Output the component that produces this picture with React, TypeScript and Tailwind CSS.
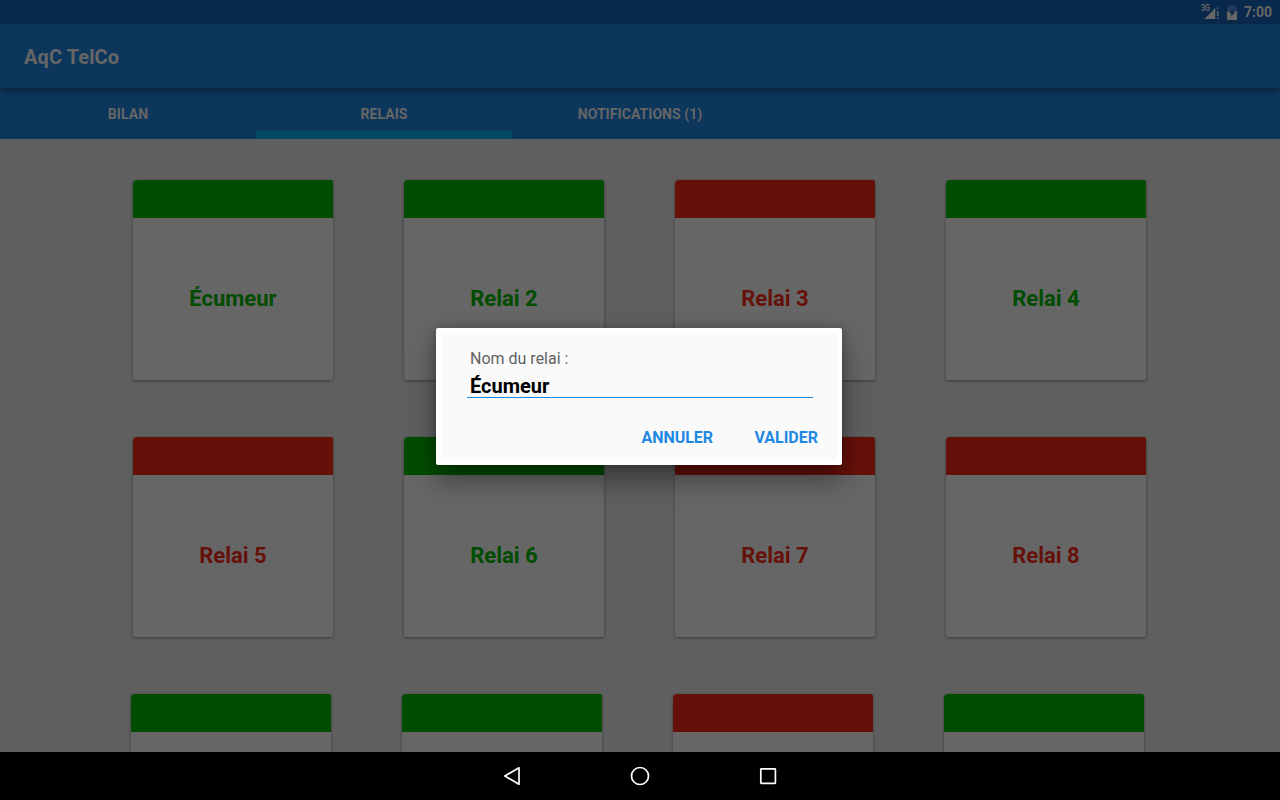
const GREEN = { bar: "bg-[#004c00]", text: "text-[#004c00]" };
const RED = { bar: "bg-[#66100a]", text: "text-[#66100a]" };

const rows = [
  [
    { name: "Écumeur", tone: GREEN },
    { name: "Relai 2", tone: GREEN },
    { name: "Relai 3", tone: RED },
    { name: "Relai 4", tone: GREEN },
  ],
  [
    { name: "Relai 5", tone: RED },
    { name: "Relai 6", tone: GREEN },
    { name: "Relai 7", tone: RED },
    { name: "Relai 8", tone: RED },
  ],
  [
    { name: "", tone: GREEN },
    { name: "", tone: GREEN },
    { name: "", tone: RED },
    { name: "", tone: GREEN },
  ],
];

const tabs = ["BILAN", "RELAIS", "NOTIFICATIONS (1)"];

function StatusBar() {
  return (
    <div className="relative z-20 flex h-6 shrink-0 items-center justify-end bg-[#08284c] pr-2 text-[#666]">
      <svg width="18" height="16" viewBox="0 0 18 16" className="mr-2 overflow-visible" fill="currentColor">
        <path d="M17.5 1v5H15v9H3z" fill="#203a57" />
        <path d="M14 4.5V15H3.5z" />
        <path d="M16 7h1.5v5H16zM16 13.5h1.5V15H16z" />
        <text x="0" y="7" fontSize="9" fontWeight="700" textLength="9" lengthAdjust="spacingAndGlyphs">3G</text>
      </svg>
      <svg width="10" height="15" viewBox="0 0 10 15" className="mr-[7px]">
        <path d="M3 0h4v1.5h3V15H0V1.5h3z" fill="#203a57" />
        <path d="M0 6.5h10V15H0z" fill="#666" />
        <path d="M7.8 3.2L2 7.5l2.7 1.2-1.9 3.2L8.2 7.6 5.8 6.5z" fill="#08284c" />
      </svg>
      <span className="text-sm font-bold leading-6">7:00</span>
    </div>
  );
}

function Dialog() {
  return (
    <div className="absolute left-[436px] top-[328px] z-30 h-[137px] w-[406px] rounded-[2px] border-[5px] border-white bg-[#fafafa] pl-[26px] pr-6 shadow-[0_14px_28px_rgba(0,0,0,0.4),0_0px_10px_rgba(0,0,0,0.2)]">
      <div className="pl-[3px] pt-4 text-base leading-5 text-[#616161]">Nom du relai :</div>
      <div className="h-[29px] border-b border-[#1e88e5] pl-[3px] pt-[3px] text-xl font-bold leading-[29px] text-black">
        Écumeur
      </div>
      <div className="-mr-[5px] mt-7 flex justify-end gap-[41.5px] text-base font-bold leading-6 text-[#1e88e5]">
        <button className="tracking-[-0.05px]">ANNULER</button>
        <button>VALIDER</button>
      </div>
    </div>
  );
}

export default function App() {
  return (
    <div className="relative flex h-[800px] w-[1280px] flex-col overflow-hidden bg-[#5f5f5f] font-['Roboto',sans-serif]">
      <StatusBar />
      <header className="relative z-10 flex h-16 shrink-0 items-center bg-[#0c365c] pl-6 pt-0.5 text-xl font-bold tracking-[0.1px] text-[#666] shadow-[0_3px_8px_rgba(0,0,0,0.4)]">
        AqC TelCo
      </header>
      <nav className="flex h-[51px] shrink-0 bg-[#0c365c] text-sm font-bold tracking-[0.06px] text-[#666]">
        {tabs.map((tab) => (
          <div
            key={tab}
            className={
              tab === "RELAIS"
                ? "flex w-64 items-center justify-center border-b-8 border-[#004a66] pt-2"
                : "flex w-64 items-center justify-center"
            }
          >
            {tab}
          </div>
        ))}
      </nav>
      <main className="flex min-h-0 flex-1 flex-col gap-[57px] overflow-hidden pt-[41px]">
        {rows.map((row, r) => (
          <div key={r} className={r === 2 ? "flex shrink-0 gap-[71px] pl-[131px]" : "flex shrink-0 gap-[71px] pl-[133px]"}>
            {row.map((relay, i) => (
              <div
                key={i}
                className="flex h-[200px] w-[200px] shrink-0 flex-col overflow-hidden rounded-[2px] rounded-tl-[4px] bg-[#666] shadow-[0_1px_3px_rgba(0,0,0,0.4)]"
              >
                <div className={`h-[38px] shrink-0 ${relay.tone.bar}`} />
                <div className={`flex flex-1 items-center justify-center pb-0.5 text-[22px] font-bold ${relay.tone.text}`}>
                  {relay.name}
                </div>
              </div>
            ))}
          </div>
        ))}
      </main>
      <footer className="flex h-12 shrink-0 items-center justify-center gap-[104px] bg-black">
        <svg width="24" height="24" viewBox="0 0 24 24" fill="none" stroke="#fff" strokeWidth="1.7" strokeLinejoin="round">
          <path d="M19 3.8v16.4L4.8 12z" />
        </svg>
        <svg width="24" height="24" viewBox="0 0 24 24" fill="none" stroke="#fff" strokeWidth="1.7">
          <circle cx="12" cy="12" r="8.5" />
        </svg>
        <svg width="24" height="24" viewBox="0 0 24 24" fill="none" stroke="#fff" strokeWidth="1.7">
          <rect x="4.8" y="4.8" width="14.6" height="14.6" rx="0.6" />
        </svg>
      </footer>
      <Dialog />
    </div>
  );
}
